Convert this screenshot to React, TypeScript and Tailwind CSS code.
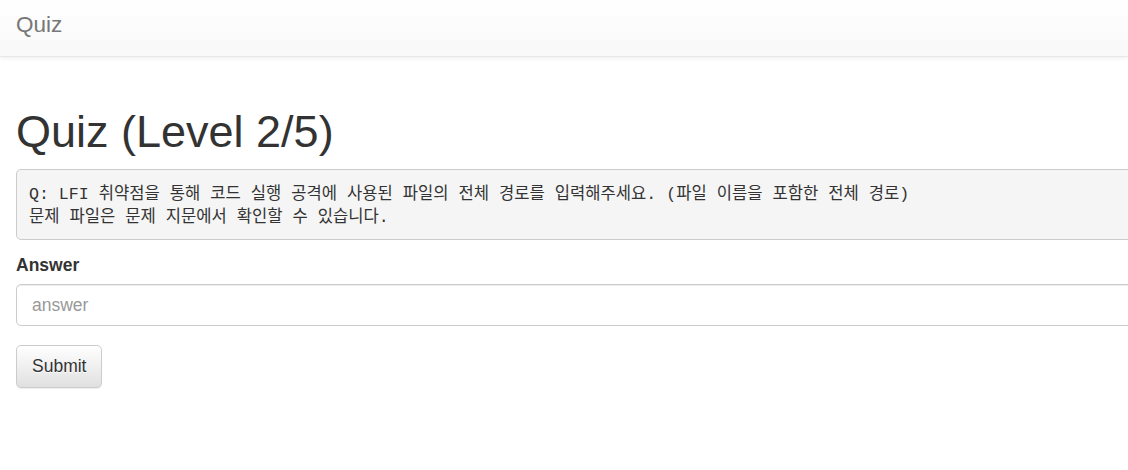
import React from "react";

const sans = "font-['Liberation_Sans','Helvetica_Neue',Arial,sans-serif]";
const mono = "font-['Liberation_Mono','Noto_Sans_CJK_KR',monospace]";

const Navbar = () => {
  return (
    <div className="h-[57px] w-full border-b border-[#e7e7e7] bg-gradient-to-b from-white to-[#f8f8f8] shadow-[0_1px_5px_rgba(0,0,0,0.075)]">
      <div className="px-4 pt-[12px] text-[22.5px] leading-[25px] text-[#777]">Quiz</div>
    </div>
  );
};

export default function App() {
  return (
    <div className={`min-h-[470px] w-full overflow-hidden bg-white text-[17.5px] leading-[25px] text-[#333] ${sans}`}>
      <Navbar />

      <div className="w-[1172px] px-4 pt-[25px]">
        <h1 className="mt-[25px] mb-[12.5px] text-[45px] leading-[1.1] font-normal">Quiz (Level 2/5)</h1>

        {/* 문제 본문 */}
        <pre
          className={`mb-[12.5px] rounded-[5px] border border-[#ccc] bg-[#f5f5f5] px-[12px] pt-[13px] pb-[10px] text-[16.6px] leading-[23px] text-[#333] ${mono}`}
        >
          {"Q: LFI 취약점을 통해 코드 실행 공격에 사용된 파일의 전체 경로를 입력해주세요. (파일 이름을 포함한 전체 경로)\n문제 파일은 문제 지문에서 확인할 수 있습니다."}
        </pre>

        <form onSubmit={(e) => e.preventDefault()}>
          <div className="mb-[18.75px]">
            <label className="mb-[6.25px] block font-bold">Answer</label>
            <input
              type="text"
              placeholder="answer"
              className="block h-[42.5px] w-full rounded-[5px] border border-[#ccc] bg-white px-[15px] py-[7.5px] text-[17.5px] text-[#555] shadow-[inset_0_1px_1px_rgba(0,0,0,0.075)] outline-none placeholder:text-[#999]"
            />
          </div>
          <button
            type="submit"
            className="h-[42.5px] rounded-[5px] border border-[#ccc] bg-gradient-to-b from-white to-[#e0e0e0] px-[15px] text-[17.5px] text-[#333] shadow-[inset_0_1px_0_rgba(255,255,255,0.15),0_1px_1px_rgba(0,0,0,0.075)] [text-shadow:0_1px_0_#fff]"
          >
            Submit
          </button>
        </form>
      </div>
    </div>
  );
}
